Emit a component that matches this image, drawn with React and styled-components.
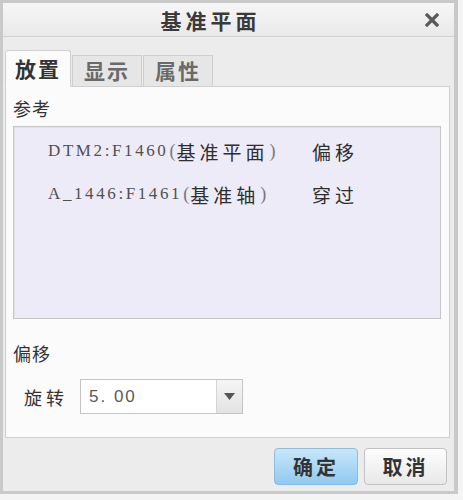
import React from 'react';
import styled, { createGlobalStyle } from 'styled-components';

const GlobalStyle = createGlobalStyle`
  html, body {
    margin: 0;
    padding: 0;
    background: #f4f4f4;
  }
  body {
    font-family: "Noto Sans CJK SC", "Liberation Sans", sans-serif;
    color: #333;
  }
`;

const Window = styled.div`
  width: 451px;
  height: 488px;
  border: 3px solid #c9c9c9;
  border-right-width: 4px;
  background: #ececec;
  display: flex;
  flex-direction: column;
`;

const TitleBar = styled.div`
  height: 33px;
  flex: none;
  display: flex;
  align-items: center;
  justify-content: center;
  position: relative;
  padding-right: 36px;
  background: linear-gradient(#f6f6f6, #e9e9e9);
  border-bottom: 1px solid #d2d2d2;
`;

const Title = styled.div`
  font-size: 21px;
  font-weight: 700;
  letter-spacing: 4px;
  color: #3a3a3a;
`;

const CloseButton = styled.div`
  position: absolute;
  right: 15px;
  top: 10px;
  width: 14px;
  height: 14px;
  display: flex;
`;

const TabRow = styled.div`
  display: flex;
  align-items: flex-end;
  padding: 13px 0 0 2px;
  flex: none;
`;

const Tab = styled.div`
  height: ${({ active }) => (active ? '37px' : '32px')};
  width: ${({ active }) => (active ? '66px' : '70px')};
  box-sizing: border-box;
  display: flex;
  align-items: center;
  justify-content: center;
  font-size: 21px;
  font-weight: 700;
  letter-spacing: 2px;
  color: ${({ active }) => (active ? '#333' : '#6a6a6a')};
  background: ${({ active }) => (active ? '#fbfbfb' : '#e6e6e6')};
  border: 1px solid #cfcfcf;
  border-bottom: ${({ active }) => (active ? '1px solid #fbfbfb' : '1px solid #cfcfcf')};
  border-radius: ${({ active }) => (active ? '3px 3px 0 0' : '0')};
  margin-right: 1px;
  margin-bottom: -1px;
  position: relative;
  z-index: ${({ active }) => (active ? 1 : 0)};
  padding-bottom: 2px;
`;

const Panel = styled.div`
  margin: 0 4px 0 2px;
  height: 352px;
  flex: none;
  box-sizing: border-box;
  background: #fbfbfb;
  border: 1px solid #cfcfcf;
  padding: 9px 7px 0 7px;
  display: flex;
  flex-direction: column;
`;

const SectionLabel = styled.div`
  font-size: 18px;
  line-height: 24px;
  letter-spacing: 1px;
  color: #333;
`;

const ListBox = styled.div`
  margin-top: 6px;
  margin-right: 1px;
  height: 193px;
  box-sizing: border-box;
  background: #eeebf8;
  border: 1px solid #c6c6c6;
  box-shadow: inset 1px 1px 0 #e2e2e2;
  padding: 12px 0 0 34px;
  display: flex;
  flex-direction: column;
  gap: 19px;
`;

const Row = styled.div`
  display: flex;
  align-items: center;
  height: 24px;
`;

const RefName = styled.div`
  width: 264px;
  display: flex;
  align-items: center;
  white-space: nowrap;
`;

const Code = styled.span`
  font-family: "Liberation Serif", serif;
  font-size: 17px;
  letter-spacing: 2.6px;
  color: #505050;
`;

const Paren = styled.span`
  font-family: "Liberation Serif", serif;
  font-size: 18px;
  color: #777;
  margin: 0 1px;
`;

const Cjk = styled.span`
  font-size: 19px;
  letter-spacing: 4px;
  color: #2e2e2e;
`;

const OffsetSection = styled.div`
  margin-top: 22px;
  display: flex;
  flex-direction: column;
`;

const FieldRow = styled.div`
  display: flex;
  align-items: center;
  margin-top: 14px;
  padding-left: 11px;
  gap: 12px;
`;

const FieldLabel = styled.div`
  font-size: 18px;
  letter-spacing: 4px;
  color: #333;
`;

const Select = styled.div`
  width: 163px;
  height: 35px;
  box-sizing: border-box;
  display: flex;
  border: 1px solid #c4c4c4;
  background: #fff;
`;

const SelectValue = styled.div`
  flex: 1;
  display: flex;
  align-items: center;
  padding-left: 8px;
  font-family: "Liberation Sans", sans-serif;
  font-size: 17px;
  color: #5a5a5a;
  letter-spacing: 2px;
`;

const SelectArrow = styled.div`
  width: 25px;
  border-left: 1px solid #d4d4d4;
  background: linear-gradient(#f6f6f6, #e2e2e2);
  display: flex;
  align-items: center;
  justify-content: center;
`;

const Footer = styled.div`
  flex: 1;
  display: flex;
  justify-content: flex-end;
  align-items: center;
  gap: 6px;
  padding: 4px 7px 0 0;
`;

const Button = styled.div`
  width: ${({ primary }) => (primary ? '84px' : '83px')};
  height: 37px;
  box-sizing: border-box;
  display: flex;
  align-items: center;
  justify-content: center;
  font-size: 20px;
  font-weight: 700;
  letter-spacing: 3px;
  color: #333;
  border-radius: 4px;
  border: 1px solid ${({ primary }) => (primary ? '#8dbce0' : '#c2c2c2')};
  background: ${({ primary }) =>
    primary ? 'linear-gradient(#c9e6fa, #8fcaf0)' : 'linear-gradient(#fdfdfd, #e8e8e8)'};
`;

export default function App() {
  return (
    <>
      <GlobalStyle />
      <Window>
        <TitleBar>
          <Title>基准平面</Title>
          <CloseButton>
            <svg width="14" height="14" viewBox="0 0 14 14">
              <path d="M2 2 L12 12 M12 2 L2 12" stroke="#5a5a5a" strokeWidth="3.2" strokeLinecap="square" />
            </svg>
          </CloseButton>
        </TitleBar>

        <TabRow>
          <Tab active>放置</Tab>
          <Tab>显示</Tab>
          <Tab>属性</Tab>
        </TabRow>

        <Panel>
          <SectionLabel>参考</SectionLabel>
          <ListBox>
            <Row>
              <RefName>
                <Code>DTM2:F1460</Code>
                <Paren>(</Paren>
                <Cjk>基准平面</Cjk>
                <Paren>)</Paren>
              </RefName>
              <Cjk>偏移</Cjk>
            </Row>
            <Row>
              <RefName>
                <Code>A_1446:F1461</Code>
                <Paren>(</Paren>
                <Cjk>基准轴</Cjk>
                <Paren>)</Paren>
              </RefName>
              <Cjk>穿过</Cjk>
            </Row>
          </ListBox>

          <OffsetSection>
            <SectionLabel>偏移</SectionLabel>
            <FieldRow>
              <FieldLabel>旋转</FieldLabel>
              <Select>
                <SelectValue>5. 00</SelectValue>
                <SelectArrow>
                  <svg width="11" height="7" viewBox="0 0 11 7">
                    <path d="M0 0 H11 L5.5 7 Z" fill="#555" />
                  </svg>
                </SelectArrow>
              </Select>
            </FieldRow>
          </OffsetSection>
        </Panel>

        <Footer>
          <Button primary>确定</Button>
          <Button>取消</Button>
        </Footer>
      </Window>
    </>
  );
}
